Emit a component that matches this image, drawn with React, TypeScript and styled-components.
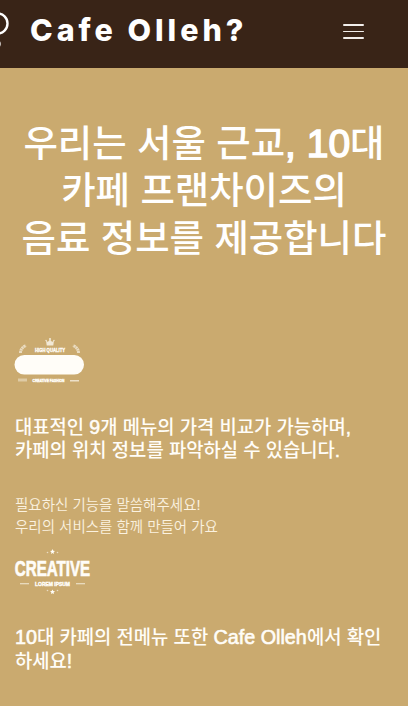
import React from "react";
import styled, { createGlobalStyle } from "styled-components";

const GlobalStyle = createGlobalStyle`
  * { box-sizing: border-box; }
  body { margin: 0; background: #caaa6f; overflow: hidden; }
`;

const Page = styled.div`
  width: 408px;
  height: 706px;
  overflow: hidden;
  background: #caaa6f;
  color: #fffdf8;
  font-family: "Liberation Sans", "Noto Sans CJK KR", sans-serif;
`;

const Header = styled.header`
  display: flex;
  align-items: flex-start;
  height: 68px;
  background: #392417;
`;

const LogoMark = styled.svg`
  flex: none;
  width: 30px;
  height: 68px;
`;

const Brand = styled.svg`
  flex: none;
  width: 220px;
  height: 68px;
`;

const MenuButton = styled.button`
  display: flex;
  flex-direction: column;
  gap: 5px;
  margin: 24px 0 0 93px;
  padding: 0;
  border: 0;
  background: none;
`;

const MenuBar = styled.span`
  width: 21px;
  height: 1.7px;
  border-radius: 1px;
  background: #f2eeeb;
`;

const Hero = styled.h1`
  margin: 53px 0 0;
  color: #fff;
  font-size: 37.4px;
  font-weight: 500;
  line-height: 47.3px;
  text-align: center;
  white-space: nowrap;
`;

const Line = styled.span`
  display: block;
`;

const Latin = styled.span<{ $size: number; $stroke: number }>`
  font-family: "Liberation Sans", sans-serif;
  font-size: ${(p) => p.$size}px;
  font-weight: 400;
  line-height: 1;
  -webkit-text-stroke: ${(p) => p.$stroke}px currentColor;
`;

const Emblem = styled.svg<{ $top: number; $height: number }>`
  display: block;
  width: 110px;
  height: ${(p) => p.$height}px;
  margin-top: ${(p) => p.$top}px;
`;

const Heading = styled.h2<{ $top: number }>`
  margin: ${(p) => p.$top}px 0 0 15px;
  font-size: 18.8px;
  font-weight: 500;
  line-height: 23.6px;
  white-space: nowrap;
`;

const Copy = styled.p`
  margin: 31px 0 0 15px;
  color: #fbf2e0;
  font-size: 14.5px;
  font-weight: 350;
  line-height: 22px;
  white-space: nowrap;
`;

export default function App() {
  return (
    <Page>
      <GlobalStyle />
      <Header>
        <LogoMark viewBox="0 0 30 68" fill="none" stroke="#fff">
          <circle cx="-2.5" cy="23.5" r="10" strokeWidth="2.4" />
          <path d="M-1 47Q1 44-1 41" strokeWidth="1.4" />
        </LogoMark>
        <Brand viewBox="0 0 220 68" role="img" aria-label="Cafe Olleh?">
          <text x="0" y="40.5" fill="#fff" fontFamily="Inter, sans-serif" fontSize="30.5" fontWeight="800" textLength="213.5">
            Cafe Olleh?
          </text>
        </Brand>
        <MenuButton aria-label="메뉴">
          <MenuBar />
          <MenuBar />
          <MenuBar />
        </MenuButton>
      </Header>
      <main>
        <Hero>
          <Line>
            우리는 서울 근교<Latin $size={39} $stroke={1.5}>, 10</Latin>대
          </Line>
          <Line>카페 프랜차이즈의</Line>
          <Line>음료 정보를 제공합니다</Line>
        </Hero>
        <Emblem $top={62} $height={70} viewBox="0 0 110 70" fill="#fffdf8">
          <path d="M46 15L47.8 17 50 14.5 52.2 17 54 15 53.3 20.5H46.7Z" fillOpacity=".75" />
          <circle cx="50" cy="14" r="1.1" fillOpacity=".75" />
          <circle cx="46" cy="15.5" r=".8" fillOpacity=".6" />
          <circle cx="54" cy="15.5" r=".8" fillOpacity=".6" />
          <g fill="none" stroke="#fffdf8" strokeOpacity=".6" strokeWidth="3" strokeDasharray="2 .4">
            <path d="M20.5 28Q20.5 23 26 20.5" />
            <path d="M78.5 28Q78.5 23 73 20.5" />
          </g>
          <text x="35" y="27" fontSize="5.2" fontWeight="700" stroke="#fffdf8" strokeWidth=".35" textLength="30" lengthAdjust="spacingAndGlyphs">HIGH QUALITY</text>
          <rect x="14.5" y="30" width="69.5" height="19.5" rx="9.75" />
          <text x="32.5" y="57" fontSize="4.2" fontWeight="700" stroke="#fffdf8" strokeWidth=".4" textLength="32" lengthAdjust="spacingAndGlyphs">CREATIVE FASHION</text>
          <rect x="18" y="53.5" width="9" height="3" fillOpacity=".4" />
          <rect x="70" y="55" width="9" height="1.5" fillOpacity=".65" />
        </Emblem>
        <Heading $top={21}>
          <Line>
            대표적인 <Latin $size={19.5} $stroke={0.5}>9</Latin>개 메뉴의 가격 비교가 가능하며<Latin $size={19} $stroke={0.5}>,</Latin>
          </Line>
          <Line>
            카페의 위치 정보를 파악하실 수 있습니다<Latin $size={19} $stroke={0.5}>.</Latin>
          </Line>
        </Heading>
        <Copy>
          <Line>필요하신 기능을 말씀해주세요!</Line>
          <Line>우리의 서비스를 함께 만들어 가요</Line>
        </Copy>
        <Emblem $top={2} $height={60} viewBox="0 0 110 60" fill="#fffdf8">
          <path d="M52.5 9L53.3 10.7 55 11 53.6 12.2 54 14 52.5 13 51 14 51.4 12.2 50 11 51.7 10.7Z" />
          <circle cx="47.5" cy="12.5" r=".8" fillOpacity=".6" />
          <circle cx="57.5" cy="12.5" r=".8" fillOpacity=".6" />
          <text transform="translate(14.8 36.2) scale(.65 1)" fontSize="22.5" fontWeight="700" stroke="#fffdf8" strokeWidth=".7" textLength="116" lengthAdjust="spacingAndGlyphs">
            CREATIVE
          </text>
          <text x="35" y="45.8" fontSize="5.2" fontWeight="700" stroke="#fffdf8" strokeWidth=".4" textLength="35" lengthAdjust="spacingAndGlyphs">LOREM IPSUM</text>
          <path d="M20 43.2H29V44.3H20ZM76 43.2H85V44.3H76Z" fillOpacity=".75" />
          <path d="M52.5 49.5L53.3 51 55 51.3 53.6 52.4 54 54 52.5 53.2 51 54 51.4 52.4 50 51.3 51.7 51Z" />
          <circle cx="47.5" cy="50.5" r=".8" fillOpacity=".6" />
          <circle cx="57.5" cy="50.5" r=".8" fillOpacity=".6" />
        </Emblem>
        <Heading $top={26}>
          <Line>
            <Latin $size={19.8} $stroke={0.6}>10</Latin>대 카페의 전메뉴 또한 <Latin $size={19.8} $stroke={0.6}>Cafe Olleh</Latin>에서 확인
          </Line>
          <Line>
            하세요<Latin $size={19.5} $stroke={0.5}>!</Latin>
          </Line>
        </Heading>
      </main>
    </Page>
  );
}
